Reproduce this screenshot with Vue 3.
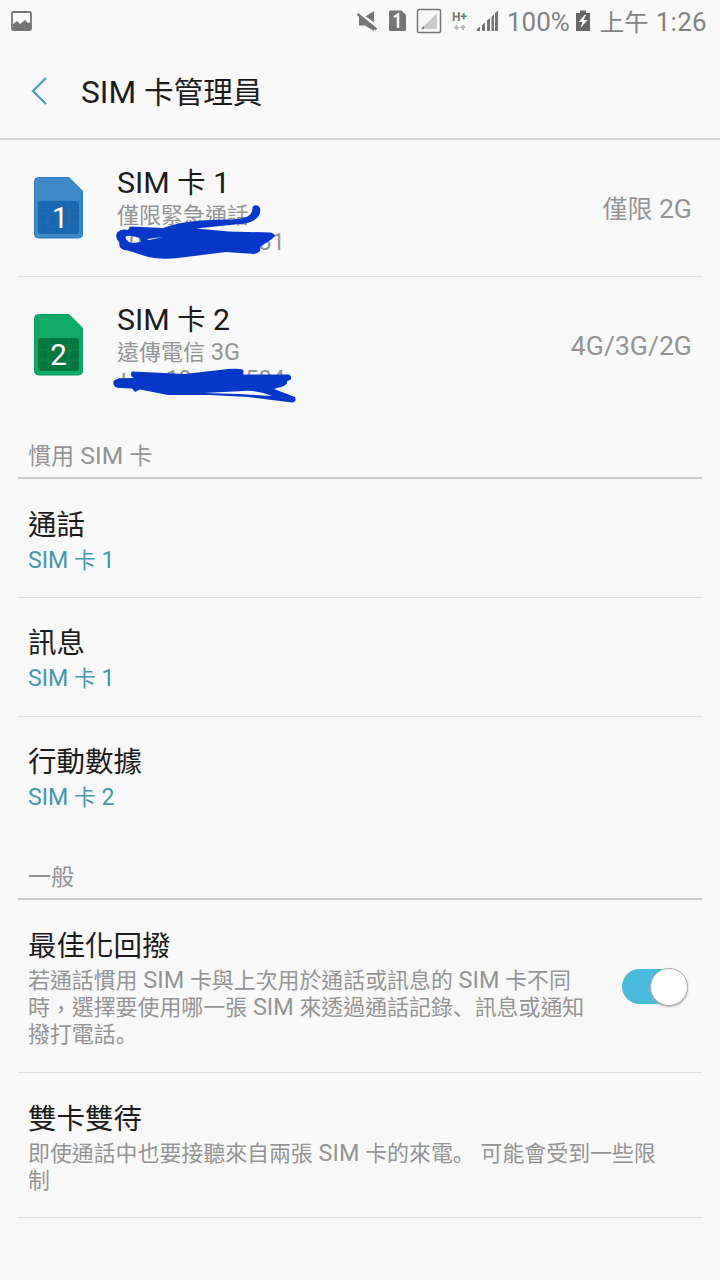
<script setup>
import { h } from 'vue'

// Splits a label into ideograph, punctuation and Latin runs so that each gets its own size.
const runClass = (run) => {
  if (/[。、]/.test(run)) return 'cjk stop'
  if (run === '，') return 'cjk comma'
  return /[\u3000-\u9fff]/.test(run) ? 'cjk' : ''
}
const MixedText = (props) =>
  h(
    'span',
    { class: 'mixed' },
    props.text
      .split(/([。、]|，|[\u3400-\u9fff]+)/)
      .filter(Boolean)
      .map((run) => (runClass(run) ? h('span', { class: runClass(run) }, run) : run))
  )
MixedText.props = ['text']

const sims = [
  {
    id: 1, name: 'SIM 卡 1', carrier: '僅限緊急通話', mode: '僅限 2G',
    body: '#4089c9', edge: '#2f78b8', chip: '#1c68b0', lines: '#226db3'
  },
  {
    id: 2, name: 'SIM 卡 2', carrier: '遠傳電信 3G', mode: '4G/3G/2G',
    body: '#0fa968', edge: '#0b9a5c', chip: '#06763f', lines: '#0b8549'
  }
]
const preferred = [
  { title: '通話', value: 'SIM 卡 1' },
  { title: '訊息', value: 'SIM 卡 1' },
  { title: '行動數據', value: 'SIM 卡 2' }
]
const callbackLines = [
  '若通話慣用 SIM 卡與上次用於通話或訊息的 SIM 卡不同',
  '時，選擇要使用哪一張 SIM 來透過通話記錄、訊息或通知',
  '撥打電話。'
]
const dualLines = ['即使通話中也要接聽來自兩張 SIM 卡的來電。 可能會受到一些限', '制']
</script>

<template>
  <div class="screen">
    <div class="status">
      <svg class="pic" width="22" height="20" viewBox="0 0 22 20">
        <rect x="1" y="1" width="19" height="18" rx="1.2" fill="none" stroke="#757575" stroke-width="1.8" />
        <path d="M2 13L6 10l3 3 5-4 3 3 3-1v7H2z" fill="#757575" />
      </svg>
      <svg class="icons" width="146" height="30" viewBox="355 6 146 30">
        <path d="M359 17h5.500l9.500-6v20l-9-5.500h-6z" fill="#757575" />
        <path d="M356.500 11.500l22 16" stroke="#f9f9f9" stroke-width="3" />
        <path d="M357.500 14l19 15.500" stroke="#757575" stroke-width="2.300" />
        <path d="M390.500 10.500h11l4.500 4.500v14.500q0 1.500-1.500 1.500h-14q-1.500 0-1.500-1.500v-17.500q0-1.500 1.500-1.500z" fill="#757575" />
        <path d="M394 17l4-2.500V28" fill="none" stroke="#f9f9f9" stroke-width="2.500" />
        <rect x="417.500" y="9.500" width="23" height="23" rx="1.500" fill="none" stroke="#757575" stroke-width="1.500" />
        <path d="M437 13v16h-16z" fill="#c9c9c9" />
        <path d="M424 26v3h-3z" fill="#757575" />
        <path d="M456.500 25v3M463 30v-4" stroke="#b7b7b7" stroke-width="2" />
        <path d="M453.500 27h6l-3 3.500zM460 28h6l-3-3.500z" fill="#b7b7b7" />
        <path d="M477 31v-2l3-2.600V31zM482 31v-6l3-2.600V31zM487 31V20.600l3-2.700V31zM491.500 31v-14.500l2.500-2.500V31zM495 31V13l3-2.500V31z" fill="#757575" />
        <text x="452" y="20.500" font-size="12" font-weight="700" fill="#757575" textLength="15">H+</text>
      </svg>
      <span class="percent">100%</span>
      <svg class="battery" width="16" height="22" viewBox="0 0 16 22">
        <path d="M1 3h4V.5h6V3h4v18H1z" fill="#666" />
        <path d="M9.500 5L3.500 12h4l-2 6 7-8H8.500l2.500-5z" fill="#fff" />
      </svg>
      <MixedText class="clock" text="上午 1:26" />
    </div>

    <header class="bar">
      <svg class="back" width="20" height="30" viewBox="0 0 20 30">
        <path d="M16 2L3 15l13 13" fill="none" stroke="#4a9fb5" stroke-width="2.300" />
      </svg>
      <h1><MixedText text="SIM 卡管理員" /></h1>
    </header>

    <main>
      <section v-for="sim in sims" :key="sim.id" class="sim" :class="'sim-' + sim.id">
        <svg class="card" width="50" height="62" viewBox="0 0 50 62">
          <path d="M4.500.5H35L48.500 14V57q0 4-4 4h-40q-4 0-4-4V4.500q0-4 4-4z" :fill="sim.body" :stroke="sim.edge" />
          <rect x="4" y="24" width="41" height="33" rx="3" :fill="sim.chip" />
          <path d="M4 36h10v10H4M45 36H35v10h10M14 24v33M35 24v33M14 30h21M14 50h21" fill="none" :stroke="sim.lines" />
          <text :x="sim.id === 1 ? 26 : 24.500" y="50.500" text-anchor="middle" font-size="29.500" fill="#fff">{{ sim.id }}</text>
        </svg>
        <div class="info">
          <div class="name"><MixedText :text="sim.name" /></div>
          <div class="sub"><MixedText :text="sim.carrier" /></div>
          <div v-if="sim.id === 1" class="sub number"><span>0</span><span>31</span></div>
          <div v-else class="sub number second"><span>+</span><span class="mid">19</span><span>584</span></div>
          <svg v-if="sim.id === 1" class="ink" width="200" height="70" viewBox="110 200 200 70">
            <path fill="#0538c9" fill-rule="evenodd" d="M130 226.500L163 228C179 222 198 220 226 219.500C241 219.500 252 218 252.500 208.500C252 204.500 259 204 260 208.500C262 218 252 223 240 224L196 228.500L229 231.500L270 232.500Q278 234 272 239L260 247Q262 252 254 254L226 252L178 258Q158 260 145 256L128 250.500Q118 250 119.500 243Q114 237 117.500 232Q122 228.500 128 230ZM126 239Q124 235 132 236L140 238L141 242L132 243Q128 242 126 239ZM147 239L163 237L149 240Z" />
          </svg>
          <svg v-else class="ink" width="200" height="60" viewBox="110 360 200 60">
            <path fill="#0538c9" fill-rule="evenodd" d="M132 371.500Q129 376 134 378L119 378.500Q112 380 113.500 384Q114 388 120 388L132 388.500L135 392L140 389.500L168 395H210L248 397L292 402.500Q297 402 295 397L274 389L284 386Q288 384 287 381Q294 379 289.500 374.500L243 374.500Q245 369 240 369Q232 368 220 370L184 374L144 372ZM204 393L243 391Q259 390 272 396L239 394Z" />
          </svg>
        </div>
        <div class="mode"><MixedText :text="sim.mode" /></div>
      </section>

      <h2 class="first"><MixedText text="慣用 SIM 卡" /></h2>
      <section v-for="item in preferred" :key="item.title" class="item">
        <div class="name"><MixedText :text="item.title" /></div>
        <div class="value"><MixedText :text="item.value" /></div>
      </section>

      <h2 class="general"><MixedText text="一般" /></h2>
      <section class="option callback">
        <div>
          <div class="name"><MixedText text="最佳化回撥" /></div>
          <div v-for="line in callbackLines" :key="line" class="desc"><MixedText :text="line" /></div>
        </div>
        <div class="switch"><i></i></div>
      </section>
      <section class="option dual">
        <div>
          <div class="name"><MixedText text="雙卡雙待" /></div>
          <div v-for="line in dualLines" :key="line" class="desc"><MixedText :text="line" /></div>
        </div>
      </section>
    </main>
  </div>
</template>

<style>
body { background: #f9f9f9; }
.mixed .cjk { font-size: 0.935em; }
.mixed .stop { font-family: "Noto Sans CJK SC", sans-serif; line-height: 1; }
.mixed .comma { position: relative; top: 2px; }
</style>

<style scoped>
.screen {
  width: 720px; height: 1280px; overflow: hidden; box-sizing: border-box;
  background: #f9f9f9; color: #1c1c1c;
  font-family: Roboto, "Noto Sans CJK TC", sans-serif; white-space: nowrap;
}
.screen * { box-sizing: border-box; }
h1, h2 { margin: 0; font-weight: 400; }
svg { flex: none; display: block; }
.status { display: flex; height: 44px; padding: 0 13px 0 11px; color: #828282; font-size: 26px; line-height: 44px; }
.pic { margin-top: 11px; }
.icons { margin: 6px 6px 0 322px; }
.percent { width: 68px; }
.battery { margin: 10px 9px 0 0; }
.clock { letter-spacing: 0.3px; }
.bar { display: flex; height: 96px; padding-left: 30px; border-bottom: 2px solid #d4d4d4; }
.back { margin-top: 32px; }
h1 { margin-left: 31px; font-size: 31.700px; line-height: 97px; }
.sim { display: flex; height: 137px; margin: 0 18px; padding: 0 10px 0 16px; border-bottom: 1px solid #dedede; }
.sim-2 { border: 0; }
.card { margin-top: 37px; }
.info { position: relative; margin-left: 33px; padding-top: 24px; flex: 1; }
.name { font-size: 30.500px; line-height: 37px; }
.sim .name { font-size: 30.300px; }
.sub { font-size: 23.500px; line-height: 27px; color: #949494; }
.number { display: flex; justify-content: space-between; width: 168px; padding-left: 12px; }
.second { padding-left: 0; }
.mid { margin-right: 18px; }
.ink { position: absolute; left: -7px; top: 60px; }
.sim-2 .ink { top: 83px; }
.mode { font-size: 26.600px; line-height: 137px; color: #949494; }
h2 { margin: 0 18px; padding-left: 10px; font-size: 24.700px; line-height: 44px; color: #949494; border-bottom: 2px solid #cbcbcb; }
.first { height: 65px; padding-top: 20px; }
.item { height: 119px; margin: 0 18px; padding: 27px 10px 0; border-bottom: 1px solid #dedede; }
.item:nth-of-type(4) { padding-top: 26px; }
.item:nth-of-type(5) { border: 0; height: 117px; padding-top: 26px; }
.value { font-size: 23.200px; line-height: 32px; color: #4398ac; }
.general { height: 66px; padding-top: 21px; }
.option { display: flex; justify-content: space-between; margin: 0 18px; padding: 27px 14px 0 10px; border-bottom: 1px solid #dedede; }
.callback { height: 173px; }
.dual { height: 145px; }
.desc { position: relative; top: 2px; font-size: 23.440px; line-height: 27px; height: 27px; color: #949494; }
.switch { width: 66px; height: 35px; margin-top: 42px; border-radius: 18px; background: linear-gradient(90deg, #49b9dc 75%, transparent 75%); display: flex; justify-content: flex-end; align-items: center; }
.switch i { flex: none; width: 38px; height: 38px; border-radius: 50%; background: #fff; border: 1px solid #aaa; box-shadow: 0 1px 2px #aaa; }
</style>
